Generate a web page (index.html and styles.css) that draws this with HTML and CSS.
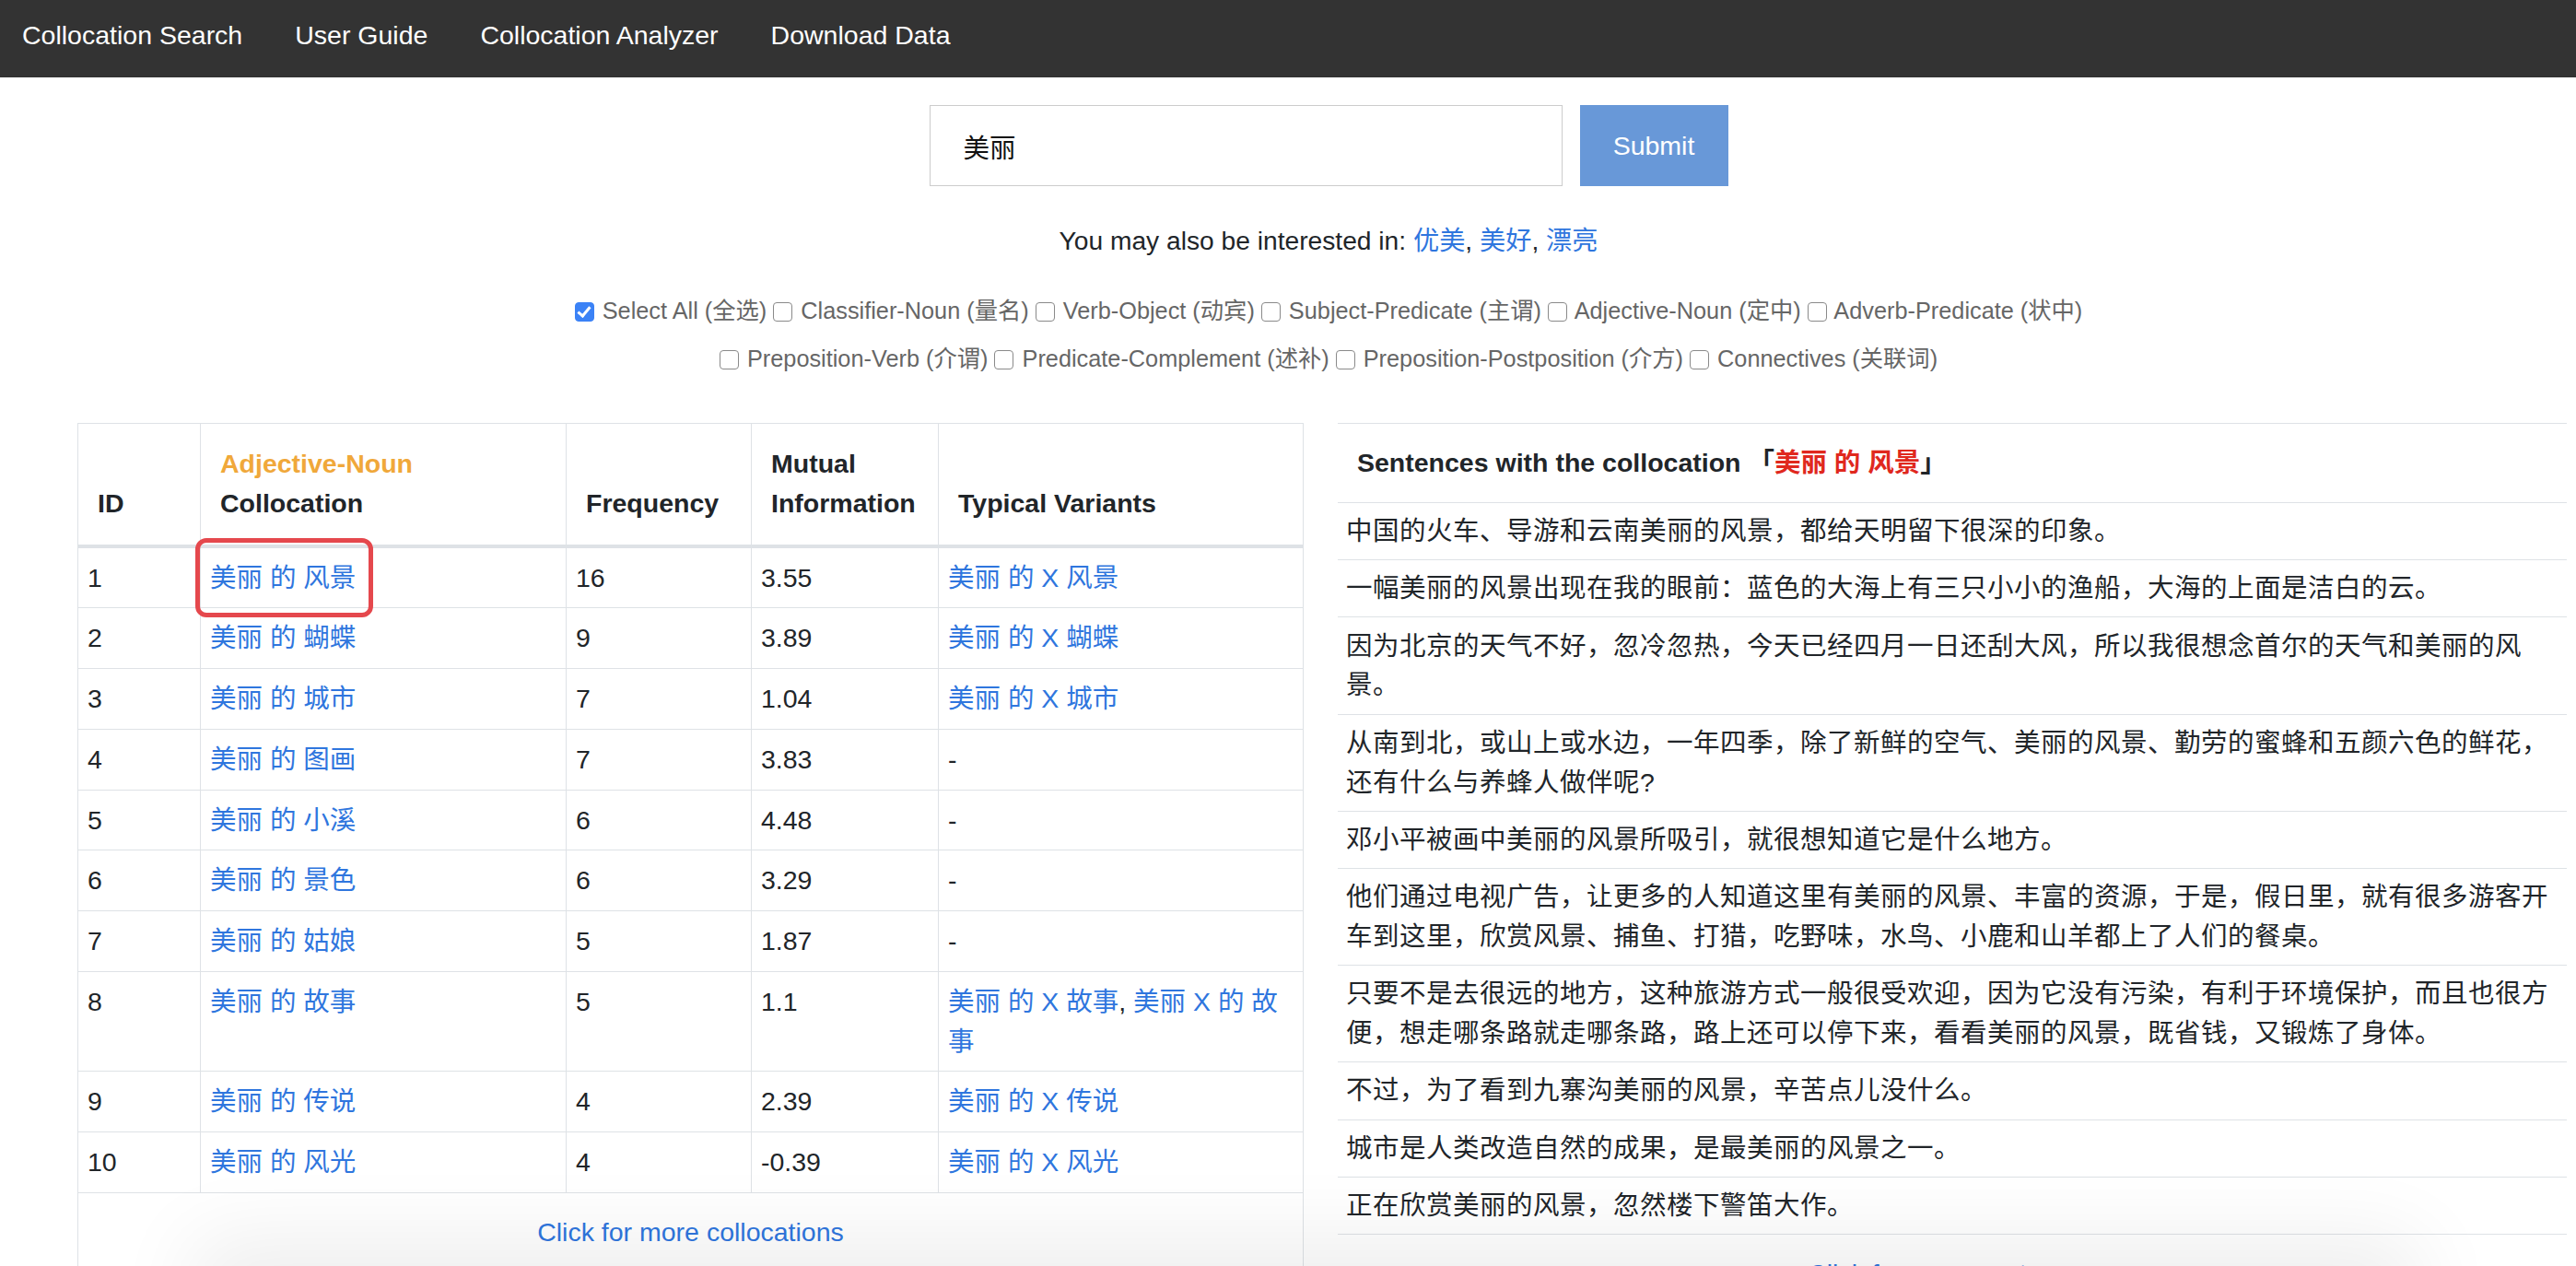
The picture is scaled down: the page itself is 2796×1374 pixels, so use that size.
FILE: index.html
```html
<!DOCTYPE html>
<html lang="zh">
<head>
<meta charset="utf-8">
<title>Collocation Search</title>
<link rel="stylesheet" href="styles.css">
</head>
<body>
<nav class="navbar">
  <a class="nav-link" href="#">Collocation Search</a>
  <a class="nav-link" href="#">User Guide</a>
  <a class="nav-link" href="#">Collocation Analyzer</a>
  <a class="nav-link" href="#">Download Data</a>
</nav>

<main class="page">
  <section class="search">
    <form class="search-form">
      <input class="search-input" type="text" value="美丽">
      <button class="btn-submit" type="button">Submit</button>
    </form>
    <p class="suggest">You may also be interested in: <a href="#">优美</a>, <a href="#">美好</a>, <a href="#">漂亮</a></p>
    <div class="filters">
      <label class="filter"><input type="checkbox" checked> Select All (全选)</label>
      <label class="filter"><input type="checkbox"> Classifier-Noun (量名)</label>
      <label class="filter"><input type="checkbox"> Verb-Object (动宾)</label>
      <label class="filter"><input type="checkbox"> Subject-Predicate (主谓)</label>
      <label class="filter"><input type="checkbox"> Adjective-Noun (定中)</label>
      <label class="filter"><input type="checkbox"> Adverb-Predicate (状中)</label>
      <br>
      <label class="filter"><input type="checkbox"> Preposition-Verb (介谓)</label>
      <label class="filter"><input type="checkbox"> Predicate-Complement (述补)</label>
      <label class="filter"><input type="checkbox"> Preposition-Postposition (介方)</label>
      <label class="filter"><input type="checkbox"> Connectives (关联词)</label>
    </div>
  </section>

  <section class="results">
    <div class="panel">
      <table class="colloc">
        <colgroup>
          <col class="c-id"><col class="c-col"><col class="c-freq"><col class="c-mi"><col class="c-var">
        </colgroup>
        <thead>
          <tr>
            <th>ID</th>
            <th><span class="rel-type">Adjective-Noun</span><br>Collocation</th>
            <th>Frequency</th>
            <th>Mutual Information</th>
            <th>Typical Variants</th>
          </tr>
        </thead>
        <tbody>
          <tr><td>1</td><td class="marked"><a href="#">美丽 的 风景</a><span class="highlight-box"></span></td><td>16</td><td>3.55</td><td><a href="#">美丽 的 X 风景</a></td></tr>
          <tr><td>2</td><td><a href="#">美丽 的 蝴蝶</a></td><td>9</td><td>3.89</td><td><a href="#">美丽 的 X 蝴蝶</a></td></tr>
          <tr><td>3</td><td><a href="#">美丽 的 城市</a></td><td>7</td><td>1.04</td><td><a href="#">美丽 的 X 城市</a></td></tr>
          <tr><td>4</td><td><a href="#">美丽 的 图画</a></td><td>7</td><td>3.83</td><td>-</td></tr>
          <tr><td>5</td><td><a href="#">美丽 的 小溪</a></td><td>6</td><td>4.48</td><td>-</td></tr>
          <tr><td>6</td><td><a href="#">美丽 的 景色</a></td><td>6</td><td>3.29</td><td>-</td></tr>
          <tr><td>7</td><td><a href="#">美丽 的 姑娘</a></td><td>5</td><td>1.87</td><td>-</td></tr>
          <tr><td>8</td><td><a href="#">美丽 的 故事</a></td><td>5</td><td>1.1</td><td><a href="#">美丽 的 X 故事</a>, <a href="#">美丽 X 的 故事</a></td></tr>
          <tr><td>9</td><td><a href="#">美丽 的 传说</a></td><td>4</td><td>2.39</td><td><a href="#">美丽 的 X 传说</a></td></tr>
          <tr><td>10</td><td><a href="#">美丽 的 风光</a></td><td>4</td><td>-0.39</td><td><a href="#">美丽 的 X 风光</a></td></tr>
          <tr><td class="more-cell" colspan="5"><a href="#">Click for more collocations</a></td></tr>
        </tbody>
      </table>
    </div>

    <div class="panel">
      <table class="sent">
        <thead>
          <tr><th>Sentences with the collocation 「<span class="hl">美丽 的 风景</span>」</th></tr>
        </thead>
        <tbody>
          <tr><td>中国的火车、导游和云南美丽的风景，都给天明留下很深的印象。</td></tr>
          <tr><td>一幅美丽的风景出现在我的眼前：蓝色的大海上有三只小小的渔船，大海的上面是洁白的云。</td></tr>
          <tr><td>因为北京的天气不好，忽冷忽热，今天已经四月一日还刮大风，所以我很想念首尔的天气和美丽的风景。</td></tr>
          <tr><td>从南到北，或山上或水边，一年四季，除了新鲜的空气、美丽的风景、勤劳的蜜蜂和五颜六色的鲜花，还有什么与养蜂人做伴呢?</td></tr>
          <tr><td>邓小平被画中美丽的风景所吸引，就很想知道它是什么地方。</td></tr>
          <tr><td>他们通过电视广告，让更多的人知道这里有美丽的风景、丰富的资源，于是，假日里，就有很多游客开车到这里，欣赏风景、捕鱼、打猎，吃野味，水鸟、小鹿和山羊都上了人们的餐桌。</td></tr>
          <tr><td>只要不是去很远的地方，这种旅游方式一般很受欢迎，因为它没有污染，有利于环境保护，而且也很方便，想走哪条路就走哪条路，路上还可以停下来，看看美丽的风景，既省钱，又锻炼了身体。</td></tr>
          <tr><td>不过，为了看到九寨沟美丽的风景，辛苦点儿没什么。</td></tr>
          <tr><td>城市是人类改造自然的成果，是最美丽的风景之一。</td></tr>
          <tr><td>正在欣赏美丽的风景，忽然楼下警笛大作。</td></tr>
        </tbody>
      </table>
      <div class="more-sent"><a href="#">Click for more sentences</a></div>
    </div>
  </section>
</main>
<div class="bottom-fade"></div>
</body>
</html>
```

FILE: styles.css
```css
* { box-sizing: border-box; }

html, body {
  margin: 0;
  padding: 0;
  background: #fff;
}

body {
  font-family: "Liberation Sans", "Noto Sans CJK SC", sans-serif;
  font-size: 28.5px;
  line-height: 1.5;
  color: #212529;
  overflow: hidden;
}

a { color: #2f76de; text-decoration: none; }

/* navbar */
.navbar {
  height: 84px;
  background: #333333;
  display: flex;
  align-items: center;
  padding: 0 0 8px 24px;
  gap: 57px;
}
.nav-link {
  color: #ffffff;
  font-size: 28.5px;
  line-height: 1;
}

/* search area */
.search {
  padding-left: 88px;
  display: flex;
  flex-direction: column;
  align-items: center;
}
.search-form {
  margin-top: 30px;
  display: flex;
  gap: 19px;
}
.search-input {
  width: 687px;
  height: 88px;
  border: 1px solid #cccccc;
  border-radius: 0;
  padding: 0 36px;
  font-family: "Liberation Sans", "Noto Sans CJK SC", sans-serif;
  font-size: 28.5px;
  color: #111;
  outline: none;
}
.btn-submit {
  width: 161px;
  height: 88px;
  border: 0;
  border-radius: 0;
  background: #6898d8;
  color: #ffffff;
  font-family: "Liberation Sans", sans-serif;
  font-size: 28.5px;
}
.suggest {
  margin: 38px 0 0;
  line-height: 42px;
  font-size: 28.2px;
}
.filters {
  margin-top: 29px;
  text-align: center;
  font-size: 25.3px;
  line-height: 52px;
  color: #666666;
}
.filter {
  white-space: nowrap;
}
.filter input {
  appearance: none;
  -webkit-appearance: none;
  width: 21px;
  height: 21px;
  margin: 0 2px 0 0;
  border: 1.5px solid #8a8a8a;
  border-radius: 4px;
  background: #fff;
  vertical-align: -3px;
  position: relative;
}
.filter input:checked {
  background: #3b82f6;
  border-color: #3b82f6;
}
.filter input:checked::after {
  content: "";
  position: absolute;
  left: 5px;
  top: 1px;
  width: 5px;
  height: 11px;
  border: solid #fff;
  border-width: 0 3px 3px 0;
  transform: rotate(40deg);
}

/* results */
.results {
  margin-top: 44px;
  padding: 0 14px 0 84px;
  display: grid;
  grid-template-columns: 1330px 1334px;
  column-gap: 38px;
  align-items: start;
}

table {
  border-collapse: collapse;
  width: 100%;
}

.colloc {
  table-layout: fixed;
  border: 1px solid #dee2e6;
}
.c-id { width: 133px; }
.c-col { width: 397px; }
.c-freq { width: 201px; }
.c-mi { width: 203px; }
.c-var { width: 396px; }

.colloc th {
  text-align: left;
  vertical-align: bottom;
  font-weight: bold;
  padding: 22px 21px 23px;
  border: 1px solid #dee2e6;
  border-bottom: 4px solid #dee2e6;
  line-height: 42.75px;
}
.rel-type { color: #f0a83a; }

.colloc td {
  padding: 11px 10px;
  border: 1px solid #dee2e6;
  vertical-align: top;
  line-height: 42.75px;
}
.colloc td.more-cell {
  text-align: center;
  padding: 21px;
}
.marked { position: relative; }
.highlight-box {
  position: absolute;
  left: -6px;
  top: -11px;
  width: 193px;
  height: 86px;
  border: 5px solid #e5484d;
  border-radius: 12px;
  pointer-events: none;
}

.sent th {
  text-align: left;
  font-weight: bold;
  padding: 21px 21px;
  border-top: 1px solid #dee2e6;
  border-bottom: 1px solid #dee2e6;
  line-height: 42.75px;
}
.hl { color: #e0281e; }
.sent td {
  padding: 9.3px 9px;
  border-bottom: 1px solid #dee2e6;
  line-height: 42.75px;
  letter-spacing: 0.5px;
}
.more-sent {
  text-align: center;
  padding-top: 21px;
  line-height: 42.75px;
}

.bottom-fade {
  position: fixed;
  left: 240px;
  right: 200px;
  bottom: -60px;
  height: 60px;
  box-shadow: 0 0 90px 30px rgba(0, 0, 0, 0.07);
  pointer-events: none;
}
```
